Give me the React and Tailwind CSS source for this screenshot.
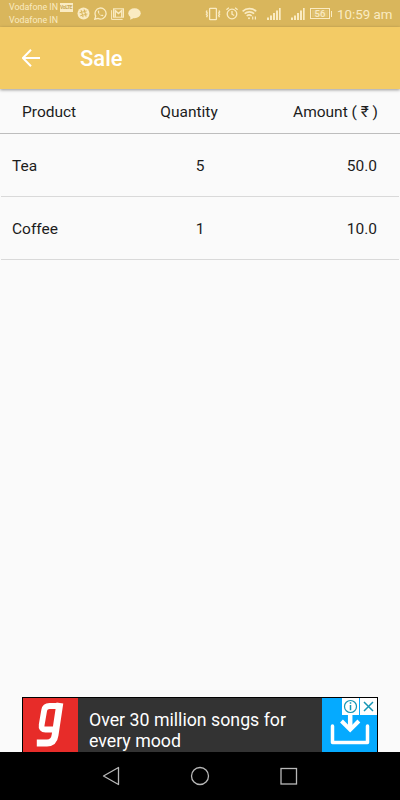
import React from "react";

const SlackIcon = () => (
  <svg className="h-[13px] w-[13px] shrink-0" viewBox="0 0 13 13">
    <circle cx="6.5" cy="6.5" r="6" fill="#faebc2" />
    <path d="M4.2 3.6 6 9.8M7.2 2.9 9 9.1M3 5.8 9.2 4M3.7 8.8 10 7" stroke="#d9b65c" strokeWidth="1.1" strokeLinecap="round" />
  </svg>
);

const WhatsappIcon = () => (
  <svg className="h-[13px] w-[13px] shrink-0" viewBox="0 0 13 13" fill="none">
    <path d="m.8 12.2.9-3.1A5.5 5.5 0 1 1 4 11.4Z" stroke="#faebc2" strokeWidth="1.3" />
    <path d="M4.3 3.3c-1.2 1 0 3.3 1.3 4.5 1.5 1.4 3.3 2 4 .6l-1.6-1-.8.8C6 7.7 5.3 6.8 4.9 5.8l.6-.8Z" fill="#faebc2" />
  </svg>
);

const MailIcon = () => (
  <svg className="h-[12px] w-[13px] shrink-0" viewBox="0 0 13 12" fill="none" stroke="#faebc2">
    <path d="M.6 2.2v9.2h11" strokeWidth="1" />
    <rect x="2.5" y=".8" width="10" height="8.4" strokeWidth="1" />
    <path d="M4.2 9V2.5l3.3 3 3.3-3V9" strokeWidth="1.5" />
  </svg>
);

const ChatIcon = () => (
  <svg className="h-[12px] w-[13px] shrink-0" viewBox="0 0 13 12" fill="#faebc2">
    <ellipse cx="6.5" cy="5.3" rx="6.2" ry="5" />
    <path d="m2.5 7-.3 4.7L7 9.5Z" />
  </svg>
);

const VibrateIcon = () => (
  <svg className="h-[14px] w-[16px] shrink-0" viewBox="0 0 16 14" fill="none" stroke="#faebc2">
    <rect x="4.6" y="1.4" width="6.800" height="11.2" rx=".6" strokeWidth="1.3" />
    <path d="m2 3.500-.6 1.300.9 1.200-.9 1.200.9 1.200-.7 1.800M14 3.500l.6 1.300-.9 1.200.9 1.200-.9 1.200.7 1.800" strokeWidth="1.400" />
  </svg>
);

const AlarmIcon = () => (
  <svg className="h-[13px] w-[12px] shrink-0" viewBox="0 0 12 13" fill="none" stroke="#faebc2" strokeWidth="1.3">
    <circle cx="6" cy="7" r="4.8" />
    <path d="M.4 2.8 2.9.8M11.6 2.8 9.1.8M6 4v3.2l2.2 1.3" />
  </svg>
);

const WifiIcon = () => (
  <svg className="h-[13px] w-[15px] shrink-0" viewBox="0 0 15 13" fill="none" stroke="#faebc2" strokeWidth="1.6">
    <path d="M.6 4.3c3.8-3.6 9.8-3.6 13.6 0M2.7 6.7c2.7-2.5 6.7-2.5 9.4 0M4.7 9c1.6-1.4 3.4-1.4 5 0" />
    <circle cx="7" cy="11.2" r="1" fill="#faebc2" stroke="none" />
    <path d="M10.7 9.5v3M13.4 9.5v3" strokeWidth="1.2" />
  </svg>
);

const SignalIcon = () => (
  <svg className="h-[12px] w-[14px] shrink-0" viewBox="0 0 14 12" fill="#faebc2">
    <path d="M0 9.5h2V12H0zM3 7.5h2V12H3zM6 5h2v7H6zM9 2.5h2V12H9zM12 0h1.7v12H12z" />
  </svg>
);

function StatusBar() {
  return (
    <div className="flex h-[27px] shrink-0 bg-[#d9b65c] text-[#faebc2]">
      <div className="w-[50px] shrink-0 pt-px pl-[9px] text-[8.9px] leading-[13px] whitespace-nowrap">
        <div>Vodafone IN</div>
        <div>Vodafone IN</div>
      </div>
      <div className="mt-[3px] ml-[10px] h-[9px] w-[13px] shrink-0 bg-[#faebc2] text-center text-[5px] leading-[9px] font-bold text-[#c9a95a]">
        <span className="-ml-px block -tracking-[0.4px]">VoLTE</span>
      </div>
      <div className="flex h-[27px] items-center gap-[4px] pl-[4px]">
        <SlackIcon />
        <WhatsappIcon />
        <MailIcon />
        <ChatIcon />
      </div>
      <div className="ml-auto flex h-[27px] shrink-0 items-center pr-[9px]">
        <VibrateIcon />
        <div className="ml-[5px] flex"><AlarmIcon /></div>
        <div className="ml-[4px] flex"><WifiIcon /></div>
        <div className="ml-[10px] flex"><SignalIcon /></div>
        <div className="ml-[10px] flex"><SignalIcon /></div>
        <div className="ml-[5px] flex h-[11px] w-[20px] items-center justify-center border border-[#faebc2] p-px">
          <span className="flex h-[7px] w-full items-center justify-center bg-[#dfc06f] text-[9.5px] leading-[9px] font-medium">56</span>
        </div>
        <div className="ml-px h-[6px] w-[1px] bg-[#faebc2]" />
        <div className="ml-[5px] w-[54px] pt-[2px] text-[13.3px] leading-[16px] whitespace-nowrap">10:59 am</div>
      </div>
    </div>
  );
}

function Row({ product, quantity, amount }) {
  return (
    <div className="mx-px flex h-[63px] shrink-0 items-center border-b border-[#d9d9d9] pt-[4px] pr-[22px] pl-[11px] text-[15.5px] text-[#1c1c1c]">
      <div className="w-[138px]">{product}</div>
      <div className="w-[100px] text-center">{quantity}</div>
      <div className="flex-1 text-right">{amount}</div>
    </div>
  );
}

const GaanaLogo = () => (
  <svg className="h-[54px] w-[55px]" viewBox="0 0 55 54" fill="none" stroke="#fff">
    <path d="M37 8H26.5q-4.6 0-5.3 4.3l-2.5 14.5q-.8 4.7 3.8 4.7h9.5" strokeWidth="5.8" strokeLinejoin="round" />
    <path d="M36.9 5.1 32.1 37q-1.1 8-8.1 8H13.8" strokeWidth="6.8" />
  </svg>
);

function AdBanner() {
  return (
    <div className="mx-[22px] flex h-[55px] shrink-0 border border-b-0 border-black bg-[#333]">
      <div className="h-[54px] w-[55px] shrink-0 bg-[#e72c29]"><GaanaLogo /></div>
      <div className="flex-1 pt-[12px] pl-[11px] text-[17.75px] leading-[21px] whitespace-nowrap text-white">
        <div>Over 30 million songs for</div>
        <div>every mood</div>
      </div>
      <div className="h-[54px] w-[55px] shrink-0 bg-[#05aaff]">
        <svg className="h-[54px] w-[55px]" viewBox="0 0 55 54" fill="none">
          <path d="M10.5 28v16.5h35V28" stroke="#fff" strokeWidth="3.5" strokeLinecap="round" strokeLinejoin="round" />
          <path d="M28.2 14v17" stroke="#fff" strokeWidth="4.5" />
          <path d="m19.5 23 8.7 8.7 8.7-8.7" stroke="#fff" strokeWidth="4" />
          <path d="M20 0h17v17H20zM38 0h17v17H38z" fill="#fff" />
          <circle cx="28.5" cy="8.5" r="6" stroke="#1596b5" strokeWidth="1.2" />
          <path d="M28.5 7v5.2M28.5 4.3v1.5" stroke="#1596b5" strokeWidth="1.5" />
          <path d="m42 4 9 9m0-9-9 9" stroke="#1596b5" strokeWidth="1.5" />
        </svg>
      </div>
    </div>
  );
}

export default function App() {
  return (
    <div className="flex h-[800px] w-[400px] flex-col overflow-hidden bg-[#fafafa] font-[Roboto,'Noto_Sans',sans-serif]">
      <StatusBar />
      <header className="flex h-[62px] shrink-0 items-center bg-[#f3cb65] pl-[22px] text-white shadow-[0_1px_3px_rgba(0,0,0,0.4)]">
        <svg className="h-[18px] w-[18px]" viewBox="0 0 18 18" fill="none" stroke="#fff" strokeWidth="2">
          <path d="M18 9H1.7M9 .8.9 9 9 17.2" />
        </svg>
        <h1 className="pt-[2px] pl-[40px] text-[22px] leading-[28px] font-medium">Sale</h1>
      </header>
      <div className="flex h-[45px] shrink-0 items-center border-b border-[#bdbdbd] pt-[3px] pr-[22px] pl-[22px] text-[15.5px] text-[#1c1c1c]">
        <div className="w-[117px]">Product</div>
        <div className="w-[100px] text-center">Quantity</div>
        <div className="flex-1 text-right">Amount ( ₹ )</div>
      </div>
      <Row product="Tea" quantity="5" amount="50.0" />
      <Row product="Coffee" quantity="1" amount="10.0" />
      <main className="flex-1" />
      <AdBanner />
      <nav className="flex h-[48px] shrink-0 bg-black">
        <svg className="h-[48px] w-[400px]" viewBox="0 0 400 48" fill="none" stroke="#b8b8b8" strokeWidth="1.3">
          <path d="m103.500 24 15-8.500v17Z" strokeLinejoin="round" />
          <circle cx="200" cy="24" r="8.500" />
          <rect x="281" y="16.500" width="15.500" height="15.500" />
        </svg>
      </nav>
    </div>
  );
}
